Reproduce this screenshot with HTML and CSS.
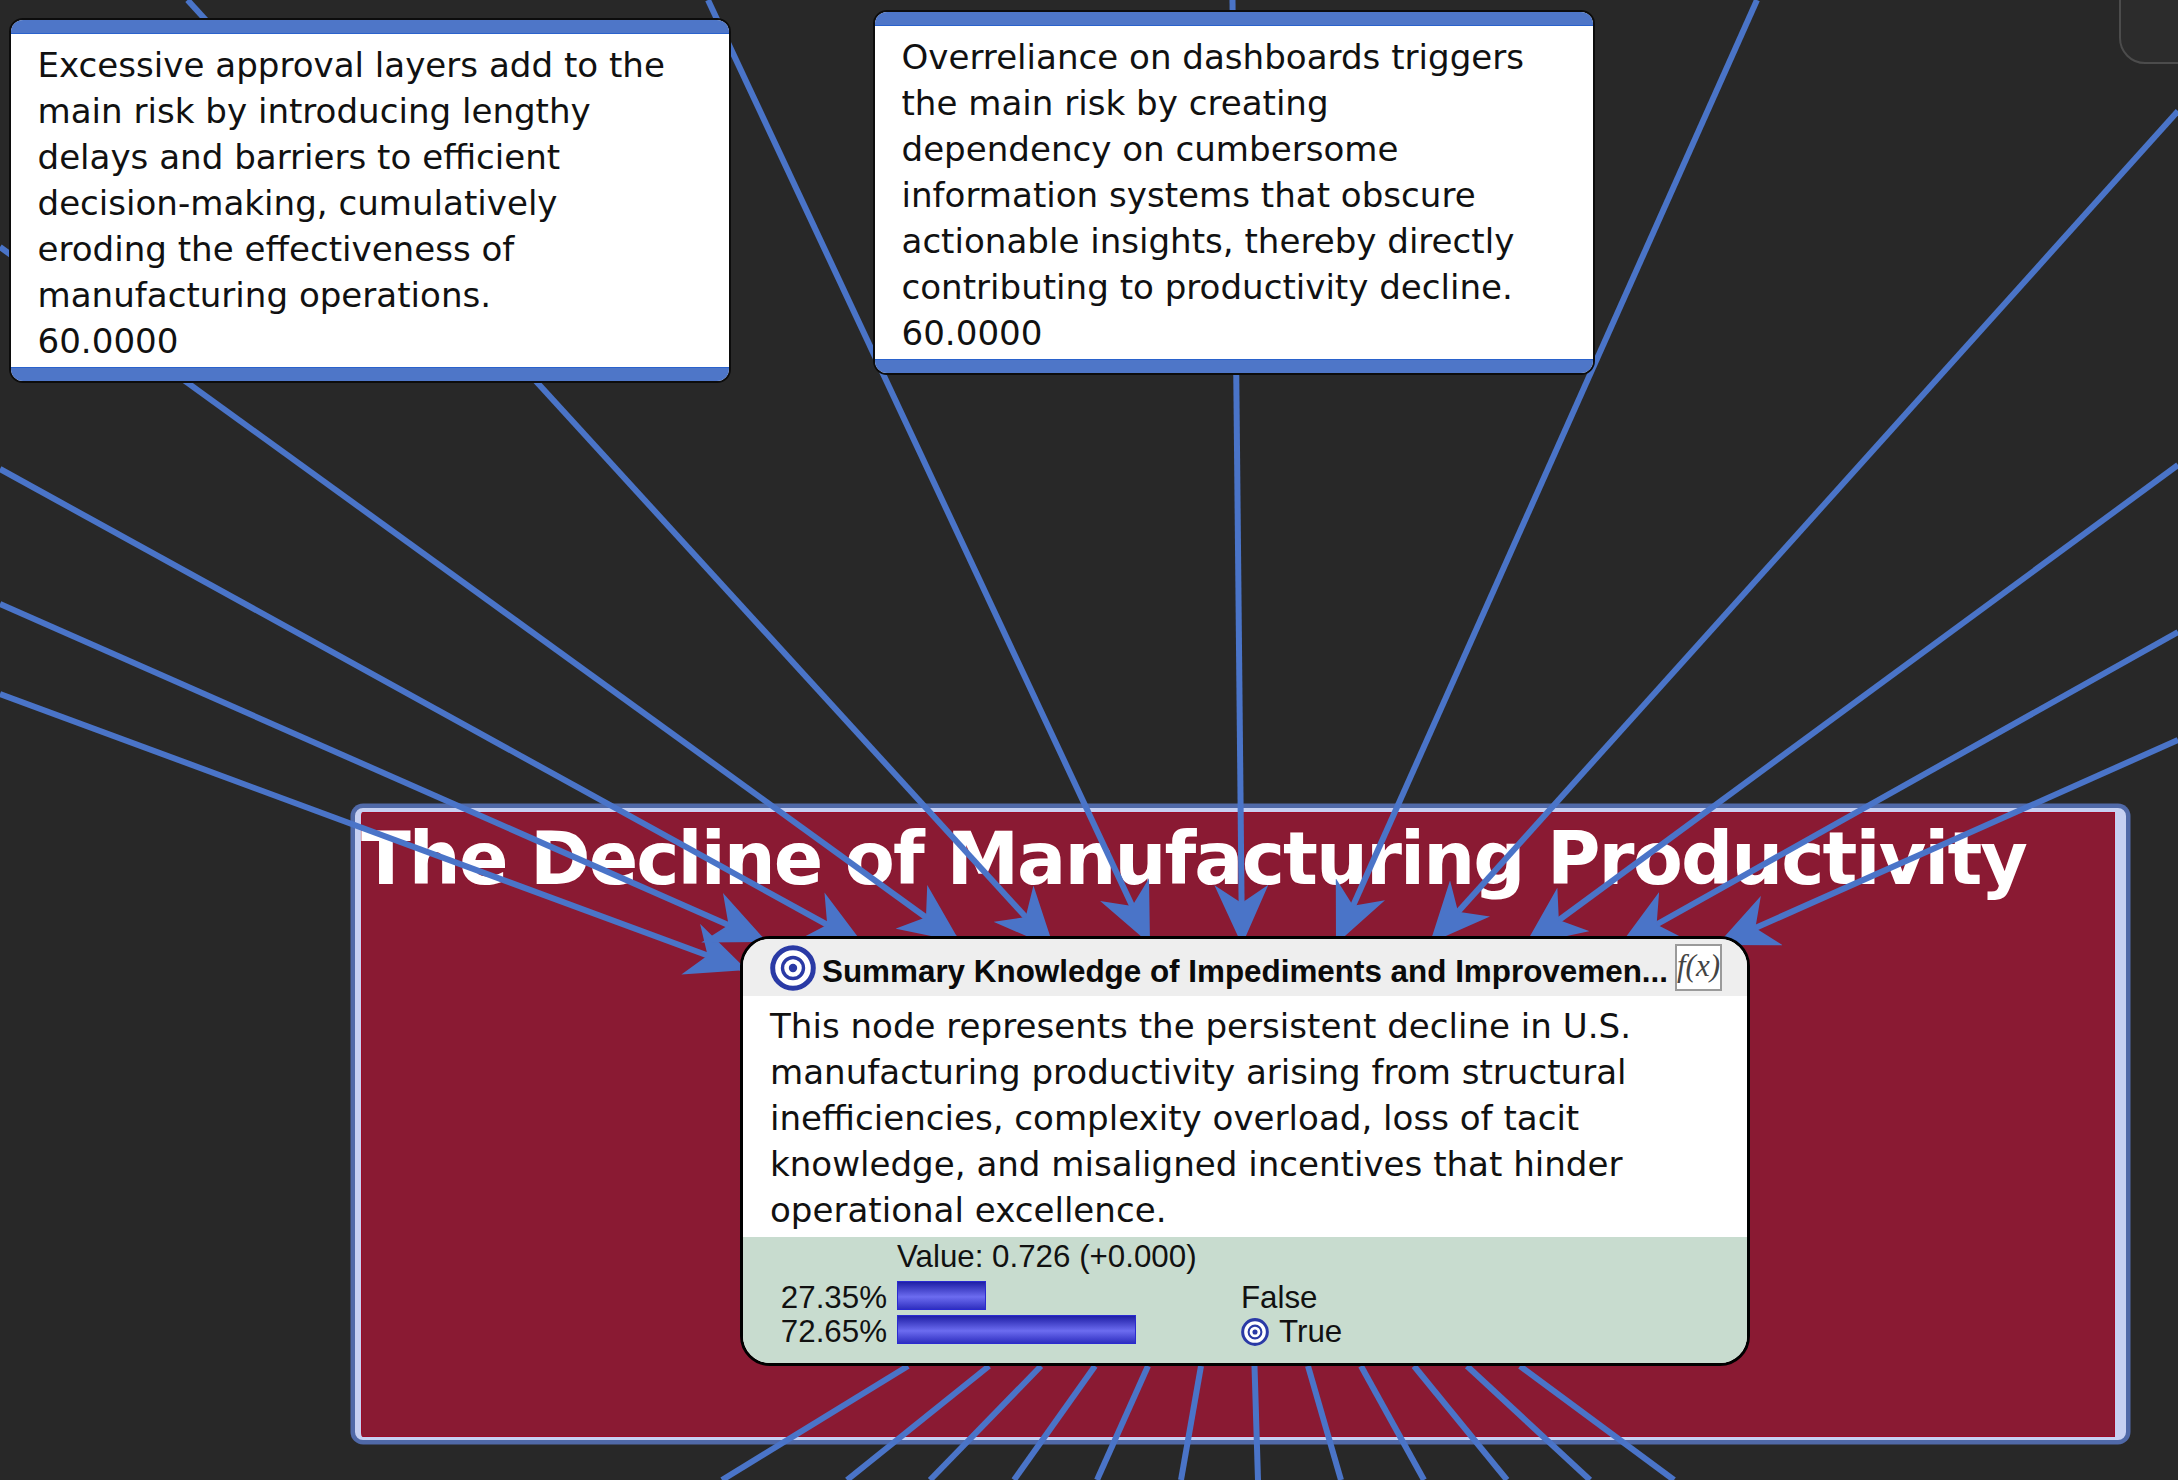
FILE: index.html
```html
<!DOCTYPE html>
<html lang="en">
<head>
<meta charset="utf-8">
<title>The Decline of Manufacturing Productivity</title>
<link rel="stylesheet" href="styles.css">
</head>
<body>
<main class="canvas">
  <div class="corner-panel"></div>

  <section class="frame">
    <h1 class="frame-title">The Decline of Manufacturing Productivity</h1>
  </section>

  <svg class="links" width="2178" height="1480" viewBox="0 0 2178 1480" aria-hidden="true">
    <defs>
      <marker id="head" viewBox="0 0 60 54" refX="60" refY="27" markerWidth="60" markerHeight="54" markerUnits="userSpaceOnUse" orient="auto">
        <path d="M0 0 L60 27 L0 54 L18 27 Z" class="head"></path>
      </marker>
    </defs>
    <g class="link-lines">
      <line x1="0" y1="694" x2="747" y2="970" marker-end="url(#head)"></line>
      <line x1="0" y1="604" x2="767" y2="942" marker-end="url(#head)"></line>
      <line x1="0" y1="469" x2="864" y2="945" marker-end="url(#head)"></line>
      <line x1="0" y1="247" x2="960" y2="942" marker-end="url(#head)"></line>
      <line x1="187.5" y1="0" x2="1054" y2="948" marker-end="url(#head)"></line>
      <line x1="708" y1="0" x2="1150" y2="944" marker-end="url(#head)"></line>
      <line x1="1232.5" y1="0" x2="1242" y2="945" marker-end="url(#head)"></line>
      <line x1="1757" y1="0" x2="1336" y2="944" marker-end="url(#head)"></line>
      <line x1="2178" y1="111" x2="1430" y2="943" marker-end="url(#head)"></line>
      <line x1="2178" y1="465" x2="1525" y2="945" marker-end="url(#head)"></line>
      <line x1="2178" y1="632" x2="1620" y2="945" marker-end="url(#head)"></line>
      <line x1="2178" y1="740" x2="1717" y2="945" marker-end="url(#head)"></line>

      <line x1="908" y1="1366" x2="722" y2="1480"></line>
      <line x1="989" y1="1366" x2="847" y2="1480"></line>
      <line x1="1041" y1="1366" x2="930" y2="1480"></line>
      <line x1="1095" y1="1366" x2="1014" y2="1480"></line>
      <line x1="1148" y1="1366" x2="1097" y2="1480"></line>
      <line x1="1201" y1="1366" x2="1181" y2="1480"></line>
      <line x1="1254.5" y1="1366" x2="1258" y2="1480"></line>
      <line x1="1308" y1="1366" x2="1341" y2="1480"></line>
      <line x1="1361" y1="1366" x2="1424" y2="1480"></line>
      <line x1="1414" y1="1366" x2="1507" y2="1480"></line>
      <line x1="1467" y1="1366" x2="1590" y2="1480"></line>
      <line x1="1520" y1="1366" x2="1674" y2="1480"></line>
    </g>
  </svg>

  <article class="card card-left">
    <p class="card-text">Excessive approval layers add to the<br>main risk by introducing lengthy<br>delays and barriers to efficient<br>decision-making, cumulatively<br>eroding the effectiveness of<br>manufacturing operations.<br>60.0000</p>
  </article>

  <article class="card card-right">
    <p class="card-text">Overreliance on dashboards triggers<br>the main risk by creating<br>dependency on cumbersome<br>information systems that obscure<br>actionable insights, thereby directly<br>contributing to productivity decline.<br>60.0000</p>
  </article>

  <article class="node">
    <header class="node-head">
      <svg class="target" width="46" height="46" viewBox="0 0 46 46" aria-hidden="true">
        <circle cx="23" cy="23" r="22.5" class="ring-fill"></circle>
        <circle cx="23" cy="23" r="20.3" class="ring ring-outer"></circle>
        <circle cx="23" cy="23" r="10.5" class="ring ring-inner"></circle>
        <circle cx="23" cy="23" r="4.2" class="dot"></circle>
      </svg>
      <h2 class="node-title">Summary Knowledge of Impediments and Improvemen...</h2>
      <span class="fx">f(x)</span>
    </header>
    <p class="node-desc">This node represents the persistent decline in U.S.<br>manufacturing productivity arising from structural<br>inefficiencies, complexity overload, loss of tacit<br>knowledge, and misaligned incentives that hinder<br>operational excellence.</p>
    <div class="stats">
      <div class="stat-value">Value: 0.726 (+0.000)</div>
      <div class="stat-rows">
        <span class="pct">27.35%</span>
        <span class="bar-cell"><span class="bar" style="width:89px"></span></span>
        <span class="state">False</span>
        <span class="pct">72.65%</span>
        <span class="bar-cell"><span class="bar" style="width:239px"></span></span>
        <span class="state state-icon">
          <svg class="target-small" width="28" height="28" viewBox="0 0 46 46" aria-hidden="true">
            <circle cx="23" cy="23" r="22.5" class="ring-fill"></circle>
            <circle cx="23" cy="23" r="20.3" class="ring ring-outer"></circle>
            <circle cx="23" cy="23" r="10.5" class="ring ring-inner"></circle>
            <circle cx="23" cy="23" r="4.2" class="dot"></circle>
          </svg>True</span>
      </div>
    </div>
  </article>
</main>
</body>
</html>
```

FILE: styles.css
```css
* { box-sizing: border-box; }

html, body {
  margin: 0;
  padding: 0;
  background: #282828;
}

.canvas {
  position: relative;
  width: 2178px;
  height: 1480px;
  overflow: hidden;
  background: #282828;
}

.corner-panel {
  position: absolute;
  left: 2119px;
  top: -40px;
  width: 100px;
  height: 104px;
  border: 2px solid #4c4c4c;
  border-radius: 26px;
  background: #2c2c2c;
}

.frame {
  position: absolute;
  left: 355px;
  top: 808px;
  width: 1771px;
  height: 632px;
  border-style: solid;
  border-color: #c6d0f2;
  border-width: 4px 11px 3px 6px;
  border-radius: 8px;
  background: #8a1a33;
  box-shadow: 0 0 0 4.5px #5069a8, inset 0 0 0 1px #9c0a28;
}

.frame-title {
  margin: 4px 0 0 0;
  font-family: "DejaVu Sans", sans-serif;
  font-size: 73px;
  font-weight: 700;
  line-height: 85px;
  letter-spacing: -1.93px;
  color: #fff;
  text-shadow: 0 0 1px #a00020;
  white-space: nowrap;
}

.links {
  position: absolute;
  left: 0;
  top: 0;
}

.link-lines line {
  stroke: #4a74c8;
  stroke-width: 6;
}

.head {
  fill: #4a74c8;
}

.card {
  position: absolute;
  height: 365px;
  display: flex;
  border: 2px solid #0c0c0c;
  border-radius: 14px;
  overflow: hidden;
  background: #fff;
}

.card-left { left: 9px; top: 18px; width: 722px; }
.card-right { left: 873px; top: 10px; width: 722px; }

.card::before,
.card::after {
  content: "";
  position: absolute;
  left: 0;
  right: 0;
  height: 13px;
  background: #4e76c8;
}

.card::before { top: 0; border-bottom: 1px solid #2a62cc; }
.card::after { bottom: 0; border-top: 1px solid #2a62cc; }

.card-text {
  margin: 0;
  padding: 22px 0 0 26.5px;
  font-family: "DejaVu Sans", sans-serif;
  font-size: 34.1px;
  line-height: 46px;
  color: #111;
  white-space: nowrap;
}

.node {
  position: absolute;
  left: 740px;
  top: 936px;
  width: 1010px;
  height: 430px;
  display: flex;
  flex-direction: column;
  border: 3px solid #000;
  border-radius: 30px;
  overflow: hidden;
  background: #fff;
}

.node-head {
  display: flex;
  align-items: center;
  height: 57px;
  padding: 0 25px 0 27px;
  background: #eee;
}

.target { flex: none; }

.ring-fill { fill: #fff; }

.ring {
  fill: none;
  stroke: #2a3aa5;
}

.ring-outer { stroke-width: 5; }
.ring-inner { stroke-width: 3.4; }

.dot { fill: #2a3aa5; }

.node-title {
  flex: 1;
  margin: 0 0 0 6px;
  padding-top: 8px;
  font-family: "Liberation Sans", sans-serif;
  font-size: 31.4px;
  font-weight: 700;
  line-height: 36px;
  color: #0a0a0a;
  white-space: nowrap;
}

.fx {
  flex: none;
  width: 47px;
  height: 47px;
  border: 2px solid #9a9a9a;
  background: #fff;
  font-family: "Liberation Serif", serif;
  font-style: italic;
  font-size: 31px;
  line-height: 40px;
  text-align: center;
  color: #444;
}

.node-desc {
  flex: 1;
  margin: 0;
  padding: 7px 0 0 27px;
  font-family: "DejaVu Sans", sans-serif;
  font-size: 34.1px;
  line-height: 46px;
  color: #111;
  white-space: nowrap;
}

.stats {
  flex: none;
  height: 126px;
  background: #c8dccf;
  font-family: "Liberation Sans", sans-serif;
  font-size: 31.3px;
  line-height: 34px;
  color: #111;
}

.stat-value {
  padding: 3px 0 0 154px;
}

.stat-rows {
  display: grid;
  grid-template-columns: 144px 334px 1fr;
  column-gap: 10px;
  grid-auto-rows: 34px;
  margin-top: 7px;
}

.pct { text-align: right; }

.bar-cell {
  display: flex;
  align-items: center;
  transform: translateY(-3px);
}

.bar {
  display: block;
  height: 29px;
  border: 1px solid #2a2ad0;
  background: linear-gradient(#1f1fa6, #6c6cf0 55%, #2f2fc0);
}

.state-icon {
  display: flex;
  align-items: center;
  gap: 10px;
}

.target-small { flex: none; }
```
